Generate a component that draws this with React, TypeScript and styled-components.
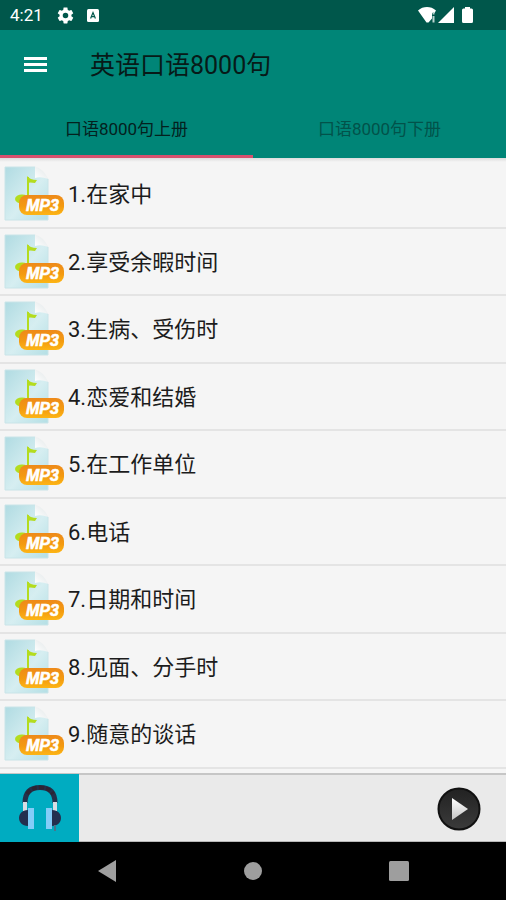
import React, { useState } from "react";
import styled, { createGlobalStyle } from "styled-components";

const GlobalStyle = createGlobalStyle`
  *, *::before, *::after { box-sizing: border-box; }
  body {
    margin: 0;
    background: #f5f5f5;
    font-family: Roboto, "Noto Sans CJK SC", sans-serif;
    color: #1c1c1c;
  }
  button {
    margin: 0;
    padding: 0;
    border: 0;
    background: none;
    font: inherit;
    color: inherit;
    cursor: pointer;
  }
  svg { display: block; flex: none; }
`;

const Screen = styled.div`
  display: flex;
  flex-direction: column;
  height: 100vh;
  overflow: hidden;
`;

const StatusBar = styled.div`
  flex: none;
  display: flex;
  align-items: center;
  justify-content: space-between;
  height: 30px;
  padding: 0 32px 0 10px;
  background: #00574b;
  color: #fff;
`;

const StatusGroup = styled.div<{ $gap: number }>`
  display: flex;
  align-items: center;
  gap: ${(p) => p.$gap}px;
`;

const Clock = styled.time`
  width: 34px;
  font-size: 17px;
  line-height: 20px;
  white-space: nowrap;
`;

const Header = styled.header`
  flex: none;
  background: #008577;
`;

const Toolbar = styled.div`
  display: flex;
  align-items: center;
  height: 70px;
  padding-left: 15px;
  gap: 35px;
`;

const MenuButton = styled.button`
  display: grid;
  place-items: center;
  width: 40px;
  height: 40px;
`;

const Title = styled.h1`
  margin: 0;
  padding-top: 2px;
  font-size: 25px;
  line-height: 32px;
  font-weight: 400;
  color: #071a18;
`;

const Tabs = styled.div`
  display: grid;
  grid-template-columns: 1fr 1fr;
`;

const Tab = styled.button<{ $active: boolean }>`
  height: 58px;
  padding-top: 2px;
  border-bottom: 3px solid ${(p) => (p.$active ? "#d8506e" : "transparent")};
  font-size: 17px;
  line-height: 24px;
  color: ${(p) => (p.$active ? "#04211e" : "#02524a")};
`;

const List = styled.ul`
  flex: 1;
  min-height: 0;
  margin: 0;
  padding: 3px 0 0;
  list-style: none;
  overflow: hidden;
  background: linear-gradient(#dcdcdc, #f5f5f5 4px);
`;

const Item = styled.li`
  height: 68px;
  border-bottom: 2px solid #e4e4e4;
  &:nth-child(even) { height: 67px; }
`;

const ItemButton = styled.button`
  display: flex;
  align-items: center;
  gap: 4px;
  width: 100%;
  height: 100%;
  padding-left: 4px;
  font-size: 22px;
  line-height: 28px;
  text-align: left;
`;

const ItemLabel = styled.span`
  padding-top: 2px;
`;

const Player = styled.footer`
  flex: none;
  display: flex;
  align-items: center;
  justify-content: space-between;
  height: 69px;
  padding-right: 25px;
  border-top: 2px solid #c6c6c6;
  border-bottom: 1px solid #b8b8b8;
  background: #eaeaea;
`;

const Cover = styled.button`
  display: grid;
  place-items: center;
  align-self: stretch;
  width: 79px;
  margin: -1px 0;
  background: #00acc1;
`;

const PlayButton = styled.button`
  padding-top: 2px;
  border-radius: 50%;
`;

const NavBar = styled.nav`
  flex: none;
  display: grid;
  grid-template-columns: 1fr 1fr 1fr;
  height: 58px;
  padding: 0 34px;
  background: #000;
`;

const NavButton = styled.button`
  display: grid;
  place-items: center;
`;

const GearIcon = () => (
  <svg width="19" height="19" viewBox="0 0 24 24" fill="#fff" aria-hidden="true">
    <path d="M19.43 12.98c.04-.32.07-.64.07-.98s-.03-.66-.07-.98l2.11-1.65c.19-.15.24-.42.12-.64l-2-3.46c-.12-.22-.39-.3-.61-.22l-2.49 1c-.52-.4-1.08-.73-1.69-.98l-.38-2.65C14.46 2.18 14.25 2 14 2h-4c-.25 0-.46.18-.49.42l-.38 2.65c-.61.25-1.17.59-1.69.98l-2.49-1c-.23-.09-.49 0-.61.22l-2 3.46c-.13.22-.07.49.12.64l2.11 1.65c-.04.32-.07.65-.07.98s.03.66.07.98l-2.11 1.65c-.19.15-.24.42-.12.64l2 3.46c.12.22.39.3.61.22l2.49-1c.52.4 1.08.73 1.69.98l.38 2.65c.03.24.24.42.49.42h4c.25 0 .46-.18.49-.42l.38-2.65c.61-.25 1.17-.59 1.69-.98l2.49 1c.23.09.49 0 .61-.22l2-3.46c.12-.22.07-.49-.12-.64l-2.11-1.65zM12 15.5a3.5 3.5 0 1 1 0-7 3.5 3.5 0 0 1 0 7z" />
  </svg>
);

const KeyboardIcon = () => (
  <svg width="12" height="13" viewBox="0 0 12 13" aria-hidden="true">
    <rect width="12" height="13" rx="1.5" fill="#fff" />
    <path d="M3.6 9.4 6 3.6l2.4 5.8M4.5 7.6h3" fill="none" stroke="#00574b" strokeWidth="1.2" />
  </svg>
);

const SignalIcons = () => (
  <svg width="56" height="18" viewBox="0 0 56 18" aria-hidden="true">
    <path d="M0 4.5C2.6 2 5.8 1 9 1s6.4 1 9 3.5L16.500 7H14v5.500l-3.500 4h-2z" fill="#fff" />
    <path d="M15.500 6v2.500M15.500 10v6.500" stroke="#b9d3cf" strokeWidth="2" />
    <path d="M36 1v16H20z" fill="#fff" />
    <path d="M44 4q0-1.500 1.500-1.500H47V1h5v1.500h1.500Q55 2.500 55 4v11.500q0 1.500-1.500 1.500h-8Q44 17 44 15.500z" fill="#fff" />
  </svg>
);

const MenuIcon = () => (
  <svg width="23" height="17" viewBox="0 0 23 17" fill="#fff" aria-hidden="true">
    <path d="M0 0h23v3H0zM0 6h23v3H0zM0 12h23v3H0z" />
  </svg>
);

const Mp3Label = styled.text`
  font: italic 700 16px "Liberation Sans", sans-serif;
  fill: #fff;
  stroke: #fff;
  stroke-width: 0.6px;
`;

const Mp3Icon = () => (
  <svg width="60" height="58" viewBox="0 0 60 58" aria-hidden="true">
    <defs>
      <linearGradient id="paper" x1="0" y1="0" x2="1" y2="1">
        <stop offset="0" stopColor="#b0dbe2" />
        <stop offset="0.55" stopColor="#d6eef1" />
        <stop offset="1" stopColor="#b4dfe5" />
      </linearGradient>
      <linearGradient id="fold" x1="0" y1="1" x2="1" y2="0">
        <stop offset="0" stopColor="#ffffff" />
        <stop offset="1" stopColor="#dfe5e6" />
      </linearGradient>
      <linearGradient id="badge" x1="0" y1="0" x2="0" y2="1">
        <stop offset="0" stopColor="#ee8a1a" />
        <stop offset="0.55" stopColor="#f39a10" />
        <stop offset="1" stopColor="#fdb515" />
      </linearGradient>
    </defs>
    <path d="M1 2h30l13 12v41H1z" fill="url(#paper)" stroke="#c9e4e8" />
    <path d="M31 1.500q8 2 13.500 12.500-8-3-13.500-1z" fill="url(#fold)" />
    <path d="M24 12v19" stroke="#b4dc1e" strokeWidth="2" />
    <path d="M23 11q3 4 10 4l-2 3q-5-1-8 0z" fill="#b4dc1e" />
    <ellipse cx="18" cy="34" rx="7" ry="4.500" fill="#b4dc1e" />
    <rect x="15" y="30" width="45" height="20" rx="8" fill="url(#badge)" />
    <Mp3Label x="22" y="46">MP3</Mp3Label>
  </svg>
);

const HeadphonesIcon = () => (
  <svg width="44" height="48" viewBox="0 0 44 48" aria-hidden="true">
    <path d="M7 19C7 8 13 3.500 22 3.500S37 8 37 19" fill="none" stroke="#23304a" strokeWidth="5" />
    <path d="M9 10q4-6.500 13-6.500T35 10" fill="none" stroke="#2d2433" strokeWidth="4" strokeDasharray="5 2" />
    <path d="M5 18h4v9H5zM35 18h4v9h-4z" fill="#d5dde3" />
    <path d="M10 26v16C4 42 1 38 1 34s3-8 9-8zM34 26v16c6 0 9-4 9-8s-3-8-9-8z" fill="#23304f" />
    <path d="M10 24h6v21h-6zM28 24h6v21h-6z" fill="#84cdf8" />
    <path d="M37 41v6" stroke="#48758d" strokeWidth="2" />
  </svg>
);

const PlayIcon = () => (
  <svg width="44" height="44" viewBox="0 0 44 44" aria-hidden="true">
    <defs>
      <linearGradient id="disc" x1="0" y1="0" x2="0" y2="1">
        <stop offset="0" stopColor="#222222" />
        <stop offset="1" stopColor="#3b3b3b" />
      </linearGradient>
      <linearGradient id="arrow" x1="0" y1="0" x2="0" y2="1">
        <stop offset="0" stopColor="#ffffff" />
        <stop offset="1" stopColor="#c4c4c4" />
      </linearGradient>
    </defs>
    <circle cx="22" cy="22" r="20.500" fill="url(#disc)" stroke="#111" strokeWidth="2" />
    <path d="M15 11 31 22 15 33z" fill="url(#arrow)" />
  </svg>
);

const tabs = ["口语8000句上册", "口语8000句下册"];

const lessons = [
  "1.在家中",
  "2.享受余暇时间",
  "3.生病、受伤时",
  "4.恋爱和结婚",
  "5.在工作单位",
  "6.电话",
  "7.日期和时间",
  "8.见面、分手时",
  "9.随意的谈话",
];

export default function App() {
  const [active, setActive] = useState(0);
  return (
    <Screen>
      <GlobalStyle />
      <StatusBar>
        <StatusGroup $gap={12}>
          <Clock>4:21</Clock>
          <GearIcon />
          <KeyboardIcon />
        </StatusGroup>
        <SignalIcons />
      </StatusBar>
      <Header>
        <Toolbar>
          <MenuButton aria-label="Menu">
            <MenuIcon />
          </MenuButton>
          <Title>英语口语8000句</Title>
        </Toolbar>
        <Tabs role="tablist">
          {tabs.map((label, i) => (
            <Tab
              key={label}
              role="tab"
              aria-selected={i === active}
              $active={i === active}
              onClick={() => setActive(i)}
            >
              {label}
            </Tab>
          ))}
        </Tabs>
      </Header>
      <List>
        {lessons.map((lesson) => (
          <Item key={lesson}>
            <ItemButton>
              <Mp3Icon />
              <ItemLabel>{lesson}</ItemLabel>
            </ItemButton>
          </Item>
        ))}
      </List>
      <Player>
        <Cover aria-label="Now playing">
          <HeadphonesIcon />
        </Cover>
        <PlayButton aria-label="Play">
          <PlayIcon />
        </PlayButton>
      </Player>
      <NavBar>
        <NavButton aria-label="Back">
          <svg width="18" height="22" viewBox="0 0 18 22" aria-hidden="true">
            <path d="M18 0v22L0 11z" fill="#9e9e9e" />
          </svg>
        </NavButton>
        <NavButton aria-label="Home">
          <svg width="18" height="18" viewBox="0 0 18 18" aria-hidden="true">
            <circle cx="9" cy="9" r="9" fill="#9e9e9e" />
          </svg>
        </NavButton>
        <NavButton aria-label="Recents">
          <svg width="20" height="20" viewBox="0 0 20 20" aria-hidden="true">
            <rect width="20" height="20" rx="1.500" fill="#9e9e9e" />
          </svg>
        </NavButton>
      </NavBar>
    </Screen>
  );
}
